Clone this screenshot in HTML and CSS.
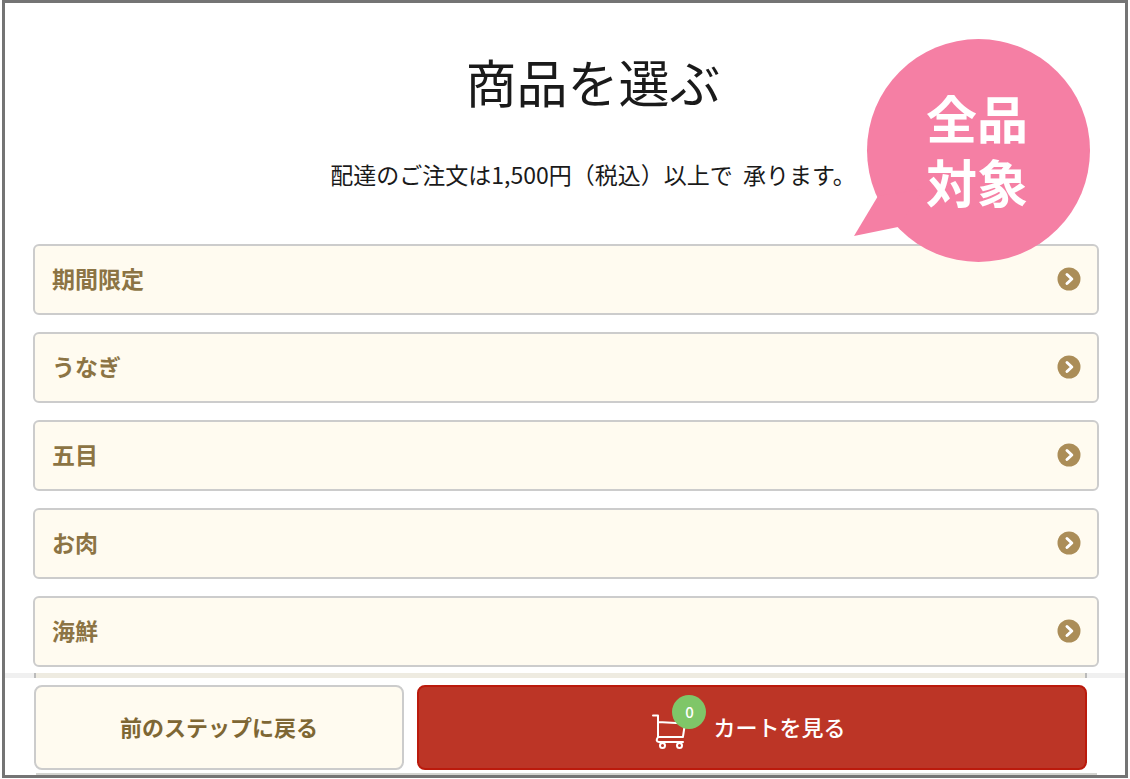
FILE: index.html
```
<!DOCTYPE html>
<html lang="ja">
<head>
    <meta charset="UTF-8">
    <meta name="viewport" content="width=device-width, initial-scale=1.0">
    <title>商品を選ぶ</title>
    <link rel="stylesheet" href="styles.css">
</head>
<body>
    <div class="page">
        <main>
            <h1>商品を選ぶ</h1>
            <p class="lead">配達のご注文は1,500円（税込）以上で&nbsp; 承ります。</p>

            <div class="bubble">
                <svg viewBox="0 0 236 223" aria-hidden="true">
                    <circle cx="124.500" cy="111.500" r="111.500" fill="#f57fa4"/>
                    <path d="M24 157L0 197L44 188L70 150Z" fill="#f57fa4"/>
                </svg>
                <p>全品<br>対象</p>
            </div>

            <nav class="categories">
                <a href="#limited">期間限定
                    <svg class="arrow" viewBox="0 0 24 24" aria-hidden="true"><circle cx="12" cy="12" r="11.500"/><path d="M10 7.500l4.800 4.500l-4.800 4.500"/></svg>
                </a>
                <a href="#unagi">うなぎ
                    <svg class="arrow" viewBox="0 0 24 24" aria-hidden="true"><circle cx="12" cy="12" r="11.500"/><path d="M10 7.500l4.800 4.500l-4.800 4.500"/></svg>
                </a>
                <a href="#gomoku">五目
                    <svg class="arrow" viewBox="0 0 24 24" aria-hidden="true"><circle cx="12" cy="12" r="11.500"/><path d="M10 7.500l4.800 4.500l-4.800 4.500"/></svg>
                </a>
                <a href="#meat">お肉
                    <svg class="arrow" viewBox="0 0 24 24" aria-hidden="true"><circle cx="12" cy="12" r="11.500"/><path d="M10 7.500l4.800 4.500l-4.800 4.500"/></svg>
                </a>
                <a href="#seafood">海鮮
                    <svg class="arrow" viewBox="0 0 24 24" aria-hidden="true"><circle cx="12" cy="12" r="11.500"/><path d="M10 7.500l4.800 4.500l-4.800 4.500"/></svg>
                </a>
            </nav>
        </main>

        <footer>
            <div class="edge"><div class="edge-row"></div></div>
            <div class="actions">
                <button type="button" class="back">前のステップに戻る</button>
                <button type="button" class="cart">
                    <span class="cart-icon">
                        <svg viewBox="0 0 36 36" aria-hidden="true">
                            <path d="M1 1.500h5v21.500M6 8l27 1.500l-2 13M6 23h25M6 23q-3 4.500 1 5h24"/>
                            <circle cx="10.500" cy="31.500" r="2.500"/>
                            <circle cx="27.500" cy="31.500" r="2.500"/>
                        </svg>
                        <span class="count">0</span>
                    </span>
                    カートを見る
                </button>
            </div>
            <div class="next-row"></div>
        </footer>
    </div>
</body>
</html>
```

FILE: styles.css
```
* {
    box-sizing: border-box;
}
body {
    margin: 0;
    padding: 0 2px 1px;
    font-family: "Noto Sans CJK JP", sans-serif;
    color: #1a1a1a;
    background-color: white;
}
.page {
    position: relative;
    border: 3px solid #747474;
    overflow: hidden;
}
main {
    padding: 38px 26px 6px 28px;
}
h1 {
    margin: 0 0 37px;
    padding-left: 54px;
    font-size: 51px;
    font-weight: 400;
    line-height: 80px;
    text-align: center;
}
.lead {
    margin: 0 0 54px;
    padding-left: 54px;
    font-size: 23px;
    line-height: 32px;
    text-align: center;
}
/* speech bubble laid over the list */
.bubble {
    position: absolute;
    top: 36px;
    right: 35px;
    width: 236px;
    height: 223px;
}
.bubble svg {
    display: block;
    width: 100%;
}
.bubble p {
    position: absolute;
    inset: 0;
    margin: 0;
    padding: 51px 0 0 10px;
    color: white;
    font-family: "Liberation Sans", "Noto Sans CJK JP", sans-serif;
    font-size: 51px;
    font-weight: 700;
    line-height: 64px;
    text-align: center;
}
.categories {
    display: flex;
    flex-direction: column;
    gap: 17px;
}
.categories a {
    display: flex;
    align-items: center;
    justify-content: space-between;
    padding: 17px 16px 19px 17px;
    border: 2px solid #ccc;
    border-radius: 6px;
    background-color: #fffbf0;
    color: #8c7444;
    font-size: 23px;
    font-weight: 700;
    line-height: 31px;
    text-decoration: none;
}
.arrow {
    width: 24px;
    height: 24px;
}
.arrow circle {
    fill: #ab8d58;
}
.arrow path {
    fill: none;
    stroke: white;
    stroke-width: 3;
    stroke-linecap: round;
    stroke-linejoin: round;
}
.edge {
    padding: 0 38px 0 29px;
    background-color: #f0f0f0;
}
.edge-row {
    height: 5px;
    border: solid #bbb;
    border-width: 0 2px;
    background-color: #eeebe1;
}
.actions {
    display: grid;
    grid-template-columns: 370fr 670fr;
    gap: 13px;
    padding: 7px 38px 3px 29px;
}
.actions button {
    height: 85px;
    padding-bottom: 4px;
    border-radius: 8px;
    font-family: inherit;
    font-size: 22px;
    cursor: pointer;
}
.back {
    border: 2px solid #ccc;
    background-color: #fffbf0;
    color: #7e6734;
    font-weight: 700;
}
.cart {
    display: flex;
    align-items: center;
    justify-content: center;
    gap: 25px;
    padding: 0 12px 0 6px;
    border: 2px solid #bb1a0c;
    background-color: #bc3526;
    color: white;
    font-weight: 500;
}
.cart-icon {
    position: relative;
    width: 36px;
    height: 36px;
    margin-top: 12px;
}
.cart-icon svg {
    fill: none;
    stroke: white;
    stroke-width: 2;
    stroke-linecap: round;
    stroke-linejoin: round;
}
.count {
    position: absolute;
    top: -19px;
    left: 20px;
    width: 34px;
    height: 34px;
    border-radius: 50%;
    background-color: #7fc668;
    font-size: 15px;
    line-height: 34px;
    text-align: center;
}
.next-row {
    height: 2px;
    margin: 0 28px 0 31px;
    background-color: #d4d4d0;
}
```
